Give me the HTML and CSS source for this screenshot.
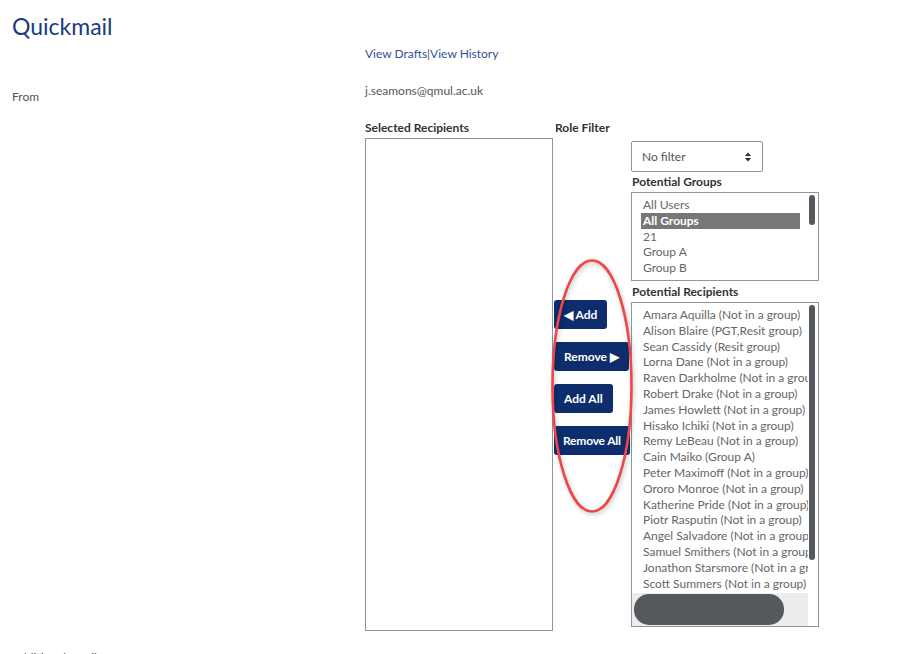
FILE: index.html
```html
<!DOCTYPE html>
<html lang="en">
<head>
    <meta charset="UTF-8">
    <title>Quickmail</title>
    <link rel="stylesheet" href="styles.css">
</head>
<body>

    <h2 class="page-title">Quickmail</h2>

    <div class="form-row links-row">
        <div class="form-label"></div>
        <div class="form-field">
            <a href="#">View Drafts</a>|<a href="#">View History</a>
        </div>
    </div>

    <div class="form-row from-row">
        <div class="form-label">From</div>
        <div class="form-field email">j.seamons@qmul.ac.uk</div>
    </div>

    <div class="form-row">
        <div class="form-label"></div>
        <div class="form-field">
            <div class="picker">
                <div class="col-head">Selected Recipients</div>
                <div class="col-head">Role Filter</div>
                <div class="col-head"></div>

                <div class="selected-box"></div>

                <div class="button-col">
                    <button class="btn">&#9664; Add</button>
                    <button class="btn">Remove &#9654;</button>
                    <button class="btn">Add All</button>
                    <button class="btn btn-tight">Remove All</button>
                    <!-- annotation drawn over the buttons -->
                    <svg class="ring" width="86" height="260" viewBox="0 0 86 260">
                        <ellipse cx="42" cy="128" rx="39.5" ry="125.5" fill="none" stroke="#ec4848" stroke-width="2.6"/>
                    </svg>
                </div>

                <div class="right-col">
                    <div class="fake-select">
                        <span>No filter</span>
                        <svg width="8" height="10" viewBox="0 0 8 10"><path d="M4 0.5 L7.2 4 L0.8 4 Z M4 9.5 L7.2 6 L0.8 6 Z" fill="#333"/></svg>
                    </div>

                    <div class="list-head">Potential Groups</div>
                    <div class="listbox groups">
                        <div class="list-main">
                            <div class="items">
                                <div class="item">All Users</div>
                                <div class="item active">All Groups</div>
                                <div class="item">21</div>
                                <div class="item">Group A</div>
                                <div class="item">Group B</div>
                                <div class="item">Group C</div>
                            </div>
                            <div class="vtrack"><div class="vthumb groups-thumb"></div></div>
                        </div>
                    </div>

                    <div class="list-head second">Potential Recipients</div>
                    <div class="listbox recipients">
                        <div class="list-main">
                            <div class="items">
                                <div class="item">Amara Aquilla (Not in a group)</div>
                                <div class="item">Alison Blaire (PGT,Resit group)</div>
                                <div class="item">Sean Cassidy (Resit group)</div>
                                <div class="item">Lorna Dane (Not in a group)</div>
                                <div class="item">Raven Darkholme (Not in a group)</div>
                                <div class="item">Robert Drake (Not in a group)</div>
                                <div class="item">James Howlett (Not in a group)</div>
                                <div class="item">Hisako Ichiki (Not in a group)</div>
                                <div class="item">Remy LeBeau (Not in a group)</div>
                                <div class="item">Cain Maiko (Group A)</div>
                                <div class="item">Peter Maximoff (Not in a group)</div>
                                <div class="item">Ororo Monroe (Not in a group)</div>
                                <div class="item">Katherine Pride (Not in a group)</div>
                                <div class="item">Piotr Rasputin (Not in a group)</div>
                                <div class="item">Angel Salvadore (Not in a group)</div>
                                <div class="item">Samuel Smithers (Not in a group)</div>
                                <div class="item">Jonathon Starsmore (Not in a group)</div>
                                <div class="item">Scott Summers (Not in a group)</div>
                            </div>
                            <div class="vtrack"><div class="vthumb recip-thumb"></div></div>
                        </div>
                        <div class="hbar">
                            <div class="htrack"><div class="hthumb"></div></div>
                            <div class="corner"></div>
                        </div>
                    </div>
                </div>
            </div>
        </div>
    </div>

    <div class="form-row bottom-row">
        <div class="form-label">Additional emails</div>
    </div>

</body>
</html>
```

FILE: styles.css
```css
body {
    font-family: Lato, "Noto Sans", sans-serif;
    font-size: 12px;
    margin: 0;
    padding: 0 12px;
    color: #555;
    background: #fff;
    height: 654px;
    overflow: hidden;
}
.page-title {
    font-size: 23px;
    font-weight: 400;
    color: #1c3b7d;
    margin: 0;
    padding-top: 12px;
    line-height: 28px;
}
.form-row {
    display: flex;
}
.form-label {
    width: 353px;
    flex-shrink: 0;
}
.links-row {
    margin-top: 6px;
    line-height: 16px;
}
.links-row a {
    color: #2f5296;
    text-decoration: none;
}
.from-row {
    margin-top: 21px;
    line-height: 16px;
}
.from-row .form-label {
    padding-top: 6px;
}
.picker {
    display: grid;
    grid-template-columns: 188px 78px 188px;
    grid-template-rows: 19px auto;
    margin-top: 14px;
}
.col-head {
    font-weight: 700;
    color: #333;
    line-height: 17px;
}
.col-head:nth-child(2) {
    padding-left: 2px;
}
.selected-box {
    border: 1px solid #8f959e;
    height: 491px;
}
.button-col {
    position: relative;
    display: flex;
    flex-direction: column;
    align-items: flex-start;
    gap: 13px;
    padding-top: 162px;
    padding-left: 1px;
}
.btn {
    font-family: inherit;
    font-size: 12px;
    font-weight: 700;
    color: #fff;
    background: #0d2d6d;
    border: none;
    border-radius: 3px;
    height: 29px;
    padding: 0 10px;
    white-space: nowrap;
    cursor: pointer;
}
.btn-tight {
    padding: 0 9px;
    letter-spacing: -0.2px;
}
.ring {
    position: absolute;
    left: -3px;
    top: 120px;
    filter: drop-shadow(1px 2px 2px rgba(0,0,0,0.25));
}
.right-col {
    display: flex;
    flex-direction: column;
    align-items: flex-start;
    padding-top: 3px;
}
.fake-select {
    border: 1px solid #8f959e;
    border-radius: 2px;
    display: flex;
    align-items: center;
    justify-content: space-between;
    padding: 0 10px;
    box-sizing: border-box;
    width: 132px;
    height: 31px;
    color: #555;
}
.list-head {
    font-weight: 700;
    color: #333;
    line-height: 20px;
    padding-left: 1px;
}
.list-head.second {
    margin-top: 1px;
}
.listbox {
    border: 1px solid #8f959e;
    width: 188px;
    box-sizing: border-box;
    display: flex;
    flex-direction: column;
    overflow: hidden;
}
.groups {
    height: 89px;
}
.recipients {
    height: 325px;
}
.list-main {
    display: flex;
    flex: 1;
    min-height: 0;
}
.items {
    flex: 1;
    overflow: hidden;
    padding: 4px 0 0 9px;
    white-space: nowrap;
    color: #666;
}
.groups .items {
    padding-right: 8px;
}
.item {
    line-height: 15.8px;
    padding-left: 2px;
}
.item.active {
    background: #777;
    color: #fff;
    font-weight: 700;
}
.vtrack {
    width: 10px;
    flex-shrink: 0;
    padding: 2px 2px 0 1px;
    box-sizing: border-box;
}
.vthumb {
    width: 6px;
    background: #55585c;
    border-radius: 3px;
}
.groups-thumb {
    height: 30px;
}
.recip-thumb {
    height: 255px;
}
.hbar {
    display: flex;
    height: 33px;
    flex-shrink: 0;
}
.htrack {
    flex: 1;
    background: #ececed;
    padding: 1px 0 1px 2px;
}
.hthumb {
    width: 150px;
    height: 31px;
    background: #55585c;
    border-radius: 15px;
}
.corner {
    width: 10px;
}
.bottom-row {
    margin-top: 19px;
    line-height: 16px;
}
```
